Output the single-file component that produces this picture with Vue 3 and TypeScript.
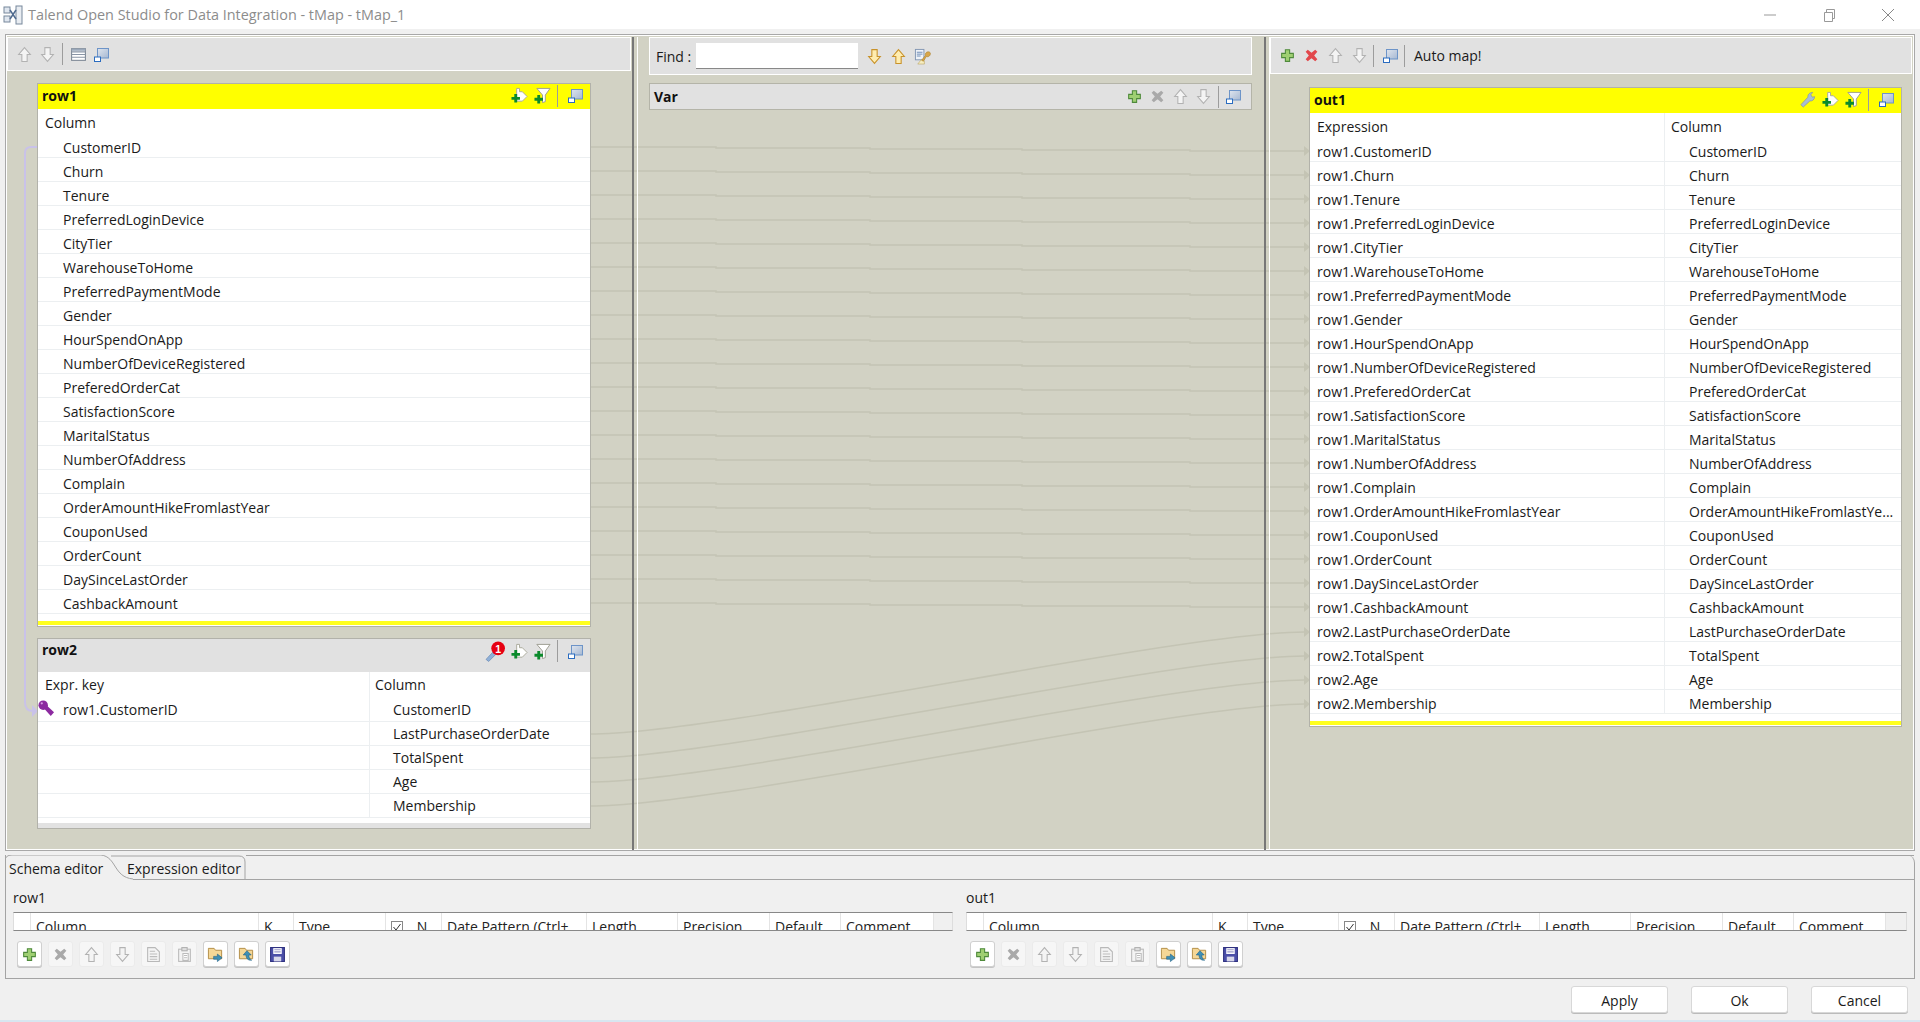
<template>
  <div class="window">
    <!-- shared icons -->
    <svg class="defs" width="0" height="0">
      <defs>
        <linearGradient id="blueFill" x1="0" y1="0" x2="1" y2="1">
          <stop offset="0" stop-color="#dfe5ee" />
          <stop offset="1" stop-color="#a6b8d2" />
        </linearGradient>
        <symbol id="plus" viewBox="0 0 16 16">
          <path d="M6 2.500h4v3.500h3.500v4H10v3.500H6V10H2.500V6H6z" fill="#9fcf72" stroke="#4f8a3c" />
        </symbol>
        <symbol id="del" viewBox="0 0 16 16">
          <path d="M2.500 4.500l2-2L8 5.500l3.500-3 2 2L10.500 8l3 3.500-2 2L8 10.500l-3.500 3-2-2L5.500 8z" fill="currentColor" />
        </symbol>
        <symbol id="up" viewBox="0 0 16 16">
          <path d="M8 1.500L13.500 8H10.500v6.500h-5V8H2.500z" fill="var(--arrow-fill, #fff)" stroke="currentColor" />
        </symbol>
        <symbol id="down" viewBox="0 0 16 16">
          <path d="M8 14.500L13.500 8H10.500V1.500h-5V8H2.500z" fill="var(--arrow-fill, #fff)" stroke="currentColor" />
        </symbol>
        <symbol id="mini" viewBox="0 0 17 17">
          <rect x="4.500" y="2.500" width="11" height="9.500" fill="url(#blueFill)" stroke="#6d94c8" />
          <rect x="1.500" y="11" width="6" height="4.500" fill="#fff" stroke="#2a6cc0" />
        </symbol>
        <symbol id="table" viewBox="0 0 16 16">
          <rect x="1.500" y="2.500" width="13" height="11" fill="#fff" stroke="#7d8794" />
          <path d="M1.500 5.500h13M1.500 8h13M1.500 10.500h13" stroke="#8a95a5" />
          <path d="M1.500 2.500h13v2h-13z" fill="#9aa8ba" />
        </symbol>
        <symbol id="addOut" viewBox="0 0 18 18">
          <path d="M6 1.500h3v3.500h3l5 5-5 5H6z" fill="#fff" stroke="#a9a99a" />
          <path d="M3.500 7.500h3v3h3v3h-3v3h-3v-3h-3v-3h3z" fill="#0b8a2c" />
        </symbol>
        <symbol id="addFilter" viewBox="0 0 18 18">
          <path d="M3 1.500h14l-5 7v7l-3 1v-8z" fill="#fff" stroke="#9c9c90" />
          <path d="M3.500 8.500h3v3h3v3h-3v3h-3v-3h-3v-3h3z" fill="#0b8a2c" />
        </symbol>
        <symbol id="wrench" viewBox="0 0 18 18">
          <path d="M2 14.500l7.500-8c-.5-2.500 1.500-5 5-5l-2 2.500 1.500 2.500 2.500-.5c0 3-2.500 5-5 4.500l-7 6.500z" fill="#a7bcd6" stroke="#7d8fa8" stroke-width=".7" />
        </symbol>
        <symbol id="keyErr" viewBox="0 0 20 20">
          <path d="M1 17.500l7-7.500 2.500 2.500-7 7z" fill="#8fb0d8" stroke="#6d8db5" stroke-width=".7" />
          <circle cx="12.500" cy="7" r="6.500" fill="#e60012" />
          <text x="12.500" y="11" text-anchor="middle" class="badge-num">1</text>
        </symbol>
        <symbol id="key" viewBox="0 0 18 18">
          <circle cx="5.500" cy="5.500" r="5" fill="#8c2aa0" />
          <path d="M6 8.500l3-3 8 7.500-3.500 4z" fill="#8c2aa0" />
          <circle cx="4" cy="3.500" r="1.200" fill="#d69ae0" />
        </symbol>
        <symbol id="findKey" viewBox="0 0 18 18">
          <rect x="1.500" y="1.500" width="9" height="11" fill="#eef2f8" stroke="#8296b2" />
          <path d="M3 4.500h6M3 6.500h6M3 8.500h4" stroke="#6a89b5" />
          <path d="M4 17l4-5 3 2v3z" fill="#f6edc0" stroke="#b8a25a" stroke-width=".6" />
          <path d="M8 13l4-5c-.5-2 1-4 3-4s3 1.500 2 3.500-3 2-4 1.500l-3 5z" fill="#d9a648" stroke="#a87f2c" stroke-width=".6" />
        </symbol>
        <symbol id="copy" viewBox="0 0 16 16">
          <path d="M2.500 1.500h7l4 4v9h-11z" fill="#f4f4f4" stroke="#b8b8b8" />
          <path d="M4.500 5h5M4.500 7.500h7M4.500 10h7M4.500 12.500h7" stroke="#bcbcbc" />
        </symbol>
        <symbol id="paste" viewBox="0 0 16 16">
          <rect x="2.500" y="3" width="11" height="11.500" fill="#f4f4f4" stroke="#bababa" />
          <rect x="5.500" y="1.500" width="5" height="3" fill="#e0e0e0" stroke="#b0b0b0" />
          <path d="M6.500 7h5v6.500h-5z M7.500 9h3M7.500 11h3" fill="#fff" stroke="#bcbcbc" />
        </symbol>
        <symbol id="folderIn" viewBox="0 0 18 18">
          <path d="M1.500 4V2.500h6l1.500 2h6.500v9h-14z" fill="#f5d796" stroke="#b08b45" />
          <path d="M7 11h4V8.500l5 4-5 4V14H7z" fill="#3f8fb5" stroke="#1e5f85" stroke-width=".6" />
        </symbol>
        <symbol id="folderOut" viewBox="0 0 18 18">
          <path d="M1.500 4V2.500h6l1.500 2h6.500v9h-14z" fill="#f5d796" stroke="#b08b45" />
          <path d="M9.500 5l4.500 4.500h-2.500c0 3 1 4.500 3 5.500-4 .5-6-2-6-5.500H5.500z" fill="#3f8fb5" stroke="#1e5f85" stroke-width=".6" />
        </symbol>
        <symbol id="save" viewBox="0 0 16 16">
          <path d="M1.500 1.500h13v13h-13z" fill="#4b4fa8" stroke="#2f3180" />
          <rect x="4" y="2" width="8" height="5.500" fill="#fff" />
          <path d="M5 3.500h6M5 5.500h6" stroke="#9a9ac8" />
          <rect x="4.500" y="10" width="7" height="4.500" fill="#d8d8ea" />
        </symbol>
      </defs>
    </svg>

    <header class="titlebar">
      <svg class="app-icon" viewBox="0 0 20 20">
        <rect x="1" y="2" width="6" height="6" fill="#dfe6ef" stroke="#77879b" />
        <rect x="1" y="11" width="6" height="6" fill="#dfe6ef" stroke="#77879b" />
        <rect x="13" y="1" width="6" height="18" fill="#e9edf2" stroke="#77879b" />
        <path d="M7 5l6 9M7 14l6-9" stroke="#4f6a8f" stroke-width="1.500" />
      </svg>
      <span class="title-text">Talend Open Studio for Data Integration - tMap - tMap_1</span>
      <div class="win-btns">
        <svg viewBox="0 0 16 16"><path d="M2 8h12" stroke="#999" /></svg>
        <svg viewBox="0 0 16 16"><path d="M3.500 5.500h8v9h-8zM5.500 5V2.500h8v9H12" fill="none" stroke="#999" /></svg>
        <svg viewBox="0 0 16 16"><path d="M2 2l12 12M14 2L2 14" stroke="#888" /></svg>
      </div>
    </header>

    <main class="editor">
      <svg class="links" viewBox="6 35 1908 815" width="1908" height="815">
        <path v-for="l in links" :key="l.id" :d="l.d" class="link" />
        <path v-for="l in links" :key="'a' + l.id" :d="l.arrow" class="arrow" />
        <path d="M37 147H31Q25 147 25 153V702Q25 711 33 711" class="key-link" />
        <path d="M32 705l6 6-6 6z" class="key-arrow" />
      </svg>

      <section class="pane pane-left">
        <div class="bar bar-left">
          <svg class="ic gray"><use href="#up" /></svg>
          <svg class="ic gray"><use href="#down" /></svg>
          <i class="sep"></i>
          <svg class="ic"><use href="#table" /></svg>
          <svg class="ic"><use href="#mini" /></svg>
        </div>

        <div class="tbl tbl-row1">
          <div class="tbl-head yellow">
            <b>row1</b>
            <div class="head-icons">
              <svg class="ic"><use href="#addOut" /></svg>
              <svg class="ic"><use href="#addFilter" /></svg>
              <i class="sep"></i>
              <svg class="ic"><use href="#mini" /></svg>
            </div>
          </div>
          <div class="row head"><span class="cell">Column</span></div>
          <div v-for="c in inputCols" :key="c" class="row">
            <span class="cell indent">{{ c }}</span>
          </div>
          <div class="strip yellow-strip"></div>
        </div>

        <div class="tbl tbl-row2">
          <div class="tbl-head gray-head">
            <b>row2</b>
            <div class="head-icons">
              <svg class="ic ic-err"><use href="#keyErr" /></svg>
              <svg class="ic"><use href="#addOut" /></svg>
              <svg class="ic"><use href="#addFilter" /></svg>
              <i class="sep"></i>
              <svg class="ic"><use href="#mini" /></svg>
            </div>
          </div>
          <div class="row head">
            <span class="cell key-col">Expr. key</span>
            <span class="cell col-col">Column</span>
          </div>
          <div v-for="(c, i) in lookupCols" :key="c" class="row">
            <span class="cell key-col indent">
              <template v-if="i === 0">
                <svg class="ic key-ic"><use href="#key" /></svg>
                row1.CustomerID
              </template>
            </span>
            <span class="cell col-col indent">{{ c }}</span>
          </div>
          <div class="strip gray-strip"></div>
        </div>
      </section>

      <div class="sash"></div>

      <section class="pane pane-mid">
        <div class="bar bar-find">
          <span class="find-label">Find :</span>
          <input class="find-input" type="text" />
          <div class="find-icons">
            <svg class="ic orange"><use href="#down" /></svg>
            <svg class="ic orange"><use href="#up" /></svg>
            <svg class="ic ic-find"><use href="#findKey" /></svg>
          </div>
        </div>
        <div class="bar bar-var">
          <b>Var</b>
          <div class="head-icons">
            <svg class="ic"><use href="#plus" /></svg>
            <svg class="ic del-gray"><use href="#del" /></svg>
            <svg class="ic gray"><use href="#up" /></svg>
            <svg class="ic gray"><use href="#down" /></svg>
            <i class="sep"></i>
            <svg class="ic"><use href="#mini" /></svg>
          </div>
        </div>
      </section>

      <div class="sash"></div>

      <section class="pane pane-right">
        <div class="bar bar-right">
          <svg class="ic"><use href="#plus" /></svg>
          <svg class="ic del-red"><use href="#del" /></svg>
          <svg class="ic gray"><use href="#up" /></svg>
          <svg class="ic gray"><use href="#down" /></svg>
          <i class="sep"></i>
          <svg class="ic"><use href="#mini" /></svg>
          <i class="sep"></i>
          <span class="automap">Auto map!</span>
        </div>

        <div class="tbl tbl-out">
          <div class="tbl-head yellow">
            <b>out1</b>
            <div class="head-icons">
              <svg class="ic"><use href="#wrench" /></svg>
              <svg class="ic"><use href="#addOut" /></svg>
              <svg class="ic"><use href="#addFilter" /></svg>
              <i class="sep"></i>
              <svg class="ic"><use href="#mini" /></svg>
            </div>
          </div>
          <div class="row head">
            <span class="cell expr-col">Expression</span>
            <span class="cell col-col">Column</span>
          </div>
          <div v-for="o in outputCols" :key="o.name" class="row">
            <span class="cell expr-col">{{ o.expr }}</span>
            <span class="cell col-col indent">{{ o.label }}</span>
          </div>
          <div class="strip yellow-strip"></div>
        </div>
      </section>
    </main>

    <section class="tabs">
      <div class="tab-head">
        <svg class="tab-shape" viewBox="0 0 260 25" width="260" height="25">
          <path d="M0 24V6Q0 0 7 0H96C112 2 108 22 128 24" class="tab-line" />
          <path d="M106 1H234Q240 1 240 7V24" class="tab-line" />
        </svg>
        <span class="tab-a">Schema editor</span>
        <span class="tab-b">Expression editor</span>
      </div>
      <div class="schemas">
        <div v-for="s in schemas" :key="s.name" class="schema" :class="s.name">
          <div class="schema-name">{{ s.name }}</div>
          <div class="schema-table">
            <span v-for="h in s.headers" :key="h.t" class="sch-cell" :style="{ width: h.w + 'px' }">
              <svg v-if="h.t === 'N'" class="chk" viewBox="0 0 12 12">
                <rect x=".5" y=".5" width="11" height="11" fill="#fff" stroke="#888" />
                <path d="M2.500 6l2.500 3 4.500-6" fill="none" stroke="#333" />
              </svg>
              {{ h.t }}
            </span>
            <span class="sch-fill"></span>
          </div>
          <div class="schema-btns">
            <button v-for="b in schemaBtns" :key="b.icon" class="tool" :class="{ off: b.off }" type="button">
              <svg class="ic" :class="{ gray: b.off, 'del-gray': b.icon === 'del' }"><use :href="'#' + b.icon" /></svg>
            </button>
          </div>
        </div>
      </div>
    </section>

    <footer class="actions">
      <button class="btn" type="button">Apply</button>
      <button class="btn" type="button">Ok</button>
      <button class="btn" type="button">Cancel</button>
    </footer>
  </div>
</template>

<script setup lang="ts">
const inputCols = [
  'CustomerID', 'Churn', 'Tenure', 'PreferredLoginDevice', 'CityTier', 'WarehouseToHome',
  'PreferredPaymentMode', 'Gender', 'HourSpendOnApp', 'NumberOfDeviceRegistered',
  'PreferedOrderCat', 'SatisfactionScore', 'MaritalStatus', 'NumberOfAddress', 'Complain',
  'OrderAmountHikeFromlastYear', 'CouponUsed', 'OrderCount', 'DaySinceLastOrder', 'CashbackAmount'
]

const lookupCols = ['CustomerID', 'LastPurchaseOrderDate', 'TotalSpent', 'Age', 'Membership']

const outputCols = [
  ...inputCols.map((c) => ({
    name: c,
    expr: `row1.${c}`,
    label: c === 'OrderAmountHikeFromlastYear' ? 'OrderAmountHikeFromlastYe...' : c
  })),
  ...lookupCols.slice(1).map((c) => ({ name: c, expr: `row2.${c}`, label: c }))
]

// the faint mapping lines between the input and output tables
const arrowHead = (y: number) => `M1304 ${y - 5}L1310 ${y}L1304 ${y + 5}Z`

const links = [
  ...inputCols.map((_, i) => {
    const y = 147 + 24 * i
    return {
      id: `r1-${i}`,
      d: `M590 ${y}H716V${y + 1}H870V${y + 2}H1022V${y + 3}H1190V${y + 4}H1304`,
      arrow: arrowHead(y + 4)
    }
  }),
  ...[0, 1, 2, 3].map((i) => {
    const a = 734 + 24 * i
    const b = 632 + 24 * i
    return {
      id: `r2-${i}`,
      d: `M590 ${a}C720 ${a} 1180 ${b} 1304 ${b}`,
      arrow: arrowHead(b)
    }
  })
]

const headerRow = (first: number, rest: number[]) => {
  const names = ['Column', 'K', 'Type', 'N', 'Date Pattern (Ctrl+', 'Length', 'Precision', 'Default', 'Comment']
  return [{ t: '', w: first }, ...names.map((t, i) => ({ t, w: rest[i] }))]
}

const schemas = [
  { name: 'row1', headers: headerRow(16, [228, 35, 92, 56, 145, 91, 92, 71, 93]) },
  { name: 'out1', headers: headerRow(16, [229, 35, 91, 56, 145, 91, 92, 71, 92]) }
]

const schemaBtns = [
  { icon: 'plus', off: false },
  { icon: 'del', off: true },
  { icon: 'up', off: true },
  { icon: 'down', off: true },
  { icon: 'copy', off: true },
  { icon: 'paste', off: true },
  { icon: 'folderIn', off: false },
  { icon: 'folderOut', off: false },
  { icon: 'save', off: false }
]
</script>

<style>
html,
body {
  margin: 0;
  background: #f0f0f0;
  overflow: hidden;
}
</style>

<style scoped>
.window {
  height: 1022px;
  display: flex;
  flex-direction: column;
  font-family: "Open Sans", "Noto Sans", sans-serif;
  font-size: 14px;
  color: #1a1a1a;
  box-sizing: border-box;
  border-bottom: 2px solid #d8e6f0;
}

.defs {
  position: absolute;
}

.badge-num {
  font: bold 10px "Liberation Sans", sans-serif;
  fill: #fff;
}

/* title bar */
.titlebar {
  height: 29px;
  flex: none;
  background: #fff;
  display: flex;
  align-items: center;
  padding-left: 3px;
}

.app-icon {
  width: 20px;
  height: 20px;
  margin-right: 5px;
}

.title-text {
  color: #8c8c8c;
  font-size: 14.4px;
}

.win-btns {
  margin-left: auto;
  display: flex;
  gap: 43px;
  padding-right: 24px;
}

.win-btns svg {
  width: 16px;
  height: 16px;
}

/* map editor */
.editor {
  position: relative;
  flex: none;
  margin: 5px 5px 0;
  height: 815px;
  width: 1908px;
  display: flex;
  background: #d2d2c4;
  border: 1px solid #a8a8a8;
  box-shadow: inset 0 0 0 1px #fff;
}

.links {
  position: absolute;
  left: 0;
  top: 0;
  pointer-events: none;
}

.link {
  fill: none;
  stroke: #c4c4b4;
  stroke-width: 1.500;
}

.arrow {
  fill: #c4c4b4;
}

.key-link {
  fill: none;
  stroke: #c9c2e9;
  stroke-width: 2;
}

.key-arrow {
  fill: #c9c2e9;
}

.pane {
  position: relative;
  padding-top: 2px;
  box-sizing: border-box;
}

.pane-left {
  flex: 0 0 626px;
}

.pane-mid {
  flex: 0 0 626px;
  padding-left: 11px;
}

.pane-right {
  flex: 1;
}

.sash {
  flex: 0 0 6px;
  position: relative;
  box-sizing: border-box;
  margin-top: 2px;
  border-left: 2px solid #777;
  border-right: 1px solid #fff;
}

.bar {
  background: #e1e1e1;
  border: 1px solid #fff;
  box-sizing: border-box;
  display: flex;
  align-items: center;
}

.bar-left {
  margin-left: 1px;
  width: 624px;
  height: 34px;
  padding-left: 8px;
  gap: 6px;
}

.bar-left .sep {
  margin-right: 1px;
}

.bar-find {
  width: 603px;
  height: 38px;
  padding-left: 6px;
}

.find-label {
  margin-right: 5px;
}

.find-input {
  width: 162px;
  height: 26px;
  box-sizing: border-box;
  border: 0;
  border-bottom: 1px solid #888;
  background: #fff;
  padding: 0;
  outline: none;
}

.find-icons {
  display: flex;
  gap: 7px;
  margin-left: 8px;
}

.ic-find {
  width: 19px;
  height: 19px;
}

.bar-var {
  width: 603px;
  height: 27px;
  margin-top: 8px;
  padding: 0 9px 0 4px;
  border-color: #f4f4f4;
  outline: 1px solid #b4b4a8;
  outline-offset: -1px;
  justify-content: space-between;
}

.bar-right {
  width: 642px;
  height: 37px;
  padding-left: 8px;
  gap: 7px;
}

.bar-right .sep {
  margin: 0 1px 0 -2px;
}

.automap {
  margin-left: 1px;
}

.ic {
  width: 17px;
  height: 17px;
  flex: none;
  color: #aaa;
}

.ic.gray {
  color: #b2b2b2;
  --arrow-fill: #f4f4f4;
}

.ic.orange {
  color: #c8922a;
  --arrow-fill: #ffedb0;
}

.ic.del-gray {
  color: #a9a9a9;
}

.ic.del-red {
  color: #e2474b;
}

.ic-err {
  width: 21px;
  height: 21px;
  margin-right: -1px;
}

.sep {
  flex: none;
  width: 1px;
  height: 22px;
  background: #9c9c9c;
}

/* tables */
.tbl {
  background: #fff;
  border: 1px solid #b2b2aa;
  box-sizing: border-box;
  display: flex;
  flex-direction: column;
  position: relative;
}

.tbl-row1 {
  margin: 12px 0 0 31px;
  width: 554px;
  height: 544px;
}

.tbl-row2 {
  margin: 11px 0 0 31px;
  width: 554px;
  height: 191px;
}

.tbl-out {
  margin: 13px 0 0 39px;
  width: 593px;
  height: 640px;
}

.tbl-head {
  flex: none;
  display: flex;
  justify-content: space-between;
  box-sizing: border-box;
  padding: 0 6px 2px 4px;
  height: 25px;
  align-items: center;
}

.tbl-head b,
.bar-var b {
  font-weight: 700;
  color: #111;
}

.tbl-head .sep {
  margin-right: 3px;
}

.yellow {
  background: #ffff00;
}

.gray-head {
  background: #e1e1e1;
  height: 33px;
  align-items: flex-start;
  padding-top: 1px;
}

.head-icons {
  display: flex;
  align-items: center;
  gap: 6px;
}

.row {
  flex: none;
  height: 24px;
  box-sizing: border-box;
  display: flex;
  border-bottom: 1px solid #eceff1;
}

.row.head {
  height: 25px;
  border-bottom: 0;
}

.cell {
  position: relative;
  display: block;
  box-sizing: border-box;
  line-height: 24px;
  padding: 2px 0 0 7px;
  white-space: nowrap;
  flex: 1;
}

.cell.indent {
  padding-left: 25px;
}

.tbl-row2 .row.head {
  height: 26px;
}

.tbl-row2 .cell {
  padding-top: 0;
}

.tbl-row2 .head .cell {
  padding-top: 1px;
}

.tbl-row2 .cell.col-col {
  padding-left: 5px;
}

.tbl-row2 .cell.col-col.indent {
  padding-left: 23px;
}

.key-col {
  flex: 0 0 331px;
}

.expr-col {
  flex: 0 0 354px;
}

.col-col {
  border-left: 1px solid #eceff1;
  padding-left: 6px;
}

.cell.col-col.indent {
  padding-left: 24px;
}

.key-ic {
  position: absolute;
  left: 0;
  top: 2px;
  width: 17px;
  height: 17px;
}

.strip {
  margin-top: auto;
  height: 4px;
  flex: none;
}

.yellow-strip {
  margin-bottom: 1px;
  background: #ffff1e;
}

.gray-strip {
  height: 5px;
  background: #e2e2e2;
}

/* bottom tabs */
.tabs {
  flex: none;
  margin: 4px 5px 0;
  height: 124px;
  box-sizing: border-box;
  border: 1px solid #a4a4a4;
  border-top: 0;
  border-top-right-radius: 8px;
  background: #f0f0f0;
}

.tab-head {
  position: relative;
  height: 25px;
  box-sizing: border-box;
  background: linear-gradient(to right, transparent 127px, #a4a4a4 127px) bottom / 100% 1px no-repeat,
    linear-gradient(to right, transparent 240px, #a4a4a4 240px) top / 100% 1px no-repeat;
}

.tab-shape {
  position: absolute;
  left: -1px;
  top: 0;
}

.tab-line {
  fill: none;
  stroke: #a4a4a4;
}

.tab-a,
.tab-b {
  position: absolute;
  top: 4px;
  line-height: 20px;
}

.tab-a {
  left: 3px;
}

.tab-b {
  left: 121px;
}

.schemas {
  display: flex;
  gap: 13px;
  padding: 0 7px;
}

.schema.row1 {
  width: 940px;
}

.schema.out1 {
  width: 941px;
}

.schema-name {
  height: 32px;
  line-height: 36px;
}

.schema-table {
  display: flex;
  height: 19px;
  box-sizing: border-box;
  border-top: 1px solid #888;
  border-bottom: 1px solid #888;
  border-left: 1px solid #ddd;
  border-right: 1px solid #ddd;
  background: #fff;
  overflow: hidden;
}

.sch-cell {
  flex: none;
  box-sizing: border-box;
  height: 40px;
  padding: 4px 0 0 5px;
  border-left: 1px solid #e4e4e4;
  white-space: nowrap;
  overflow: hidden;
  line-height: 20px;
  color: #222;
}

.sch-cell:first-child {
  padding: 0;
  border-left: 0;
}

.chk {
  width: 12px;
  height: 12px;
  margin-right: 10px;
  vertical-align: -1px;
}

.sch-fill {
  flex: 1;
  background: #f0f0f0;
  border-left: 1px solid #e4e4e4;
}

.schema-btns {
  display: flex;
  gap: 6px;
  margin: 10px 0 0 4px;
}

.tool {
  width: 25px;
  height: 26px;
  padding: 0;
  box-sizing: border-box;
  background: #fff;
  border: 1px solid #d0d0d0;
  border-radius: 3px;
  box-shadow: 0 1px 0 #c4c4c4;
  display: flex;
  align-items: center;
  justify-content: center;
}

.tool.off {
  background: #f6f6f6;
  border-color: #ebebeb;
  box-shadow: none;
}

/* dialog buttons */
.actions {
  flex: 1;
  display: flex;
  justify-content: flex-end;
  gap: 23px;
  padding: 7px 12px 0 0;
  box-sizing: border-box;
}

.btn {
  width: 97px;
  height: 27px;
  box-sizing: border-box;
  background: #fff;
  border: 1px solid #d8d8d8;
  border-radius: 3px;
  box-shadow: 0 1px 0 #bbb;
  font: inherit;
  color: #1a1a1a;
  padding: 1px 0 0;
}
</style>
